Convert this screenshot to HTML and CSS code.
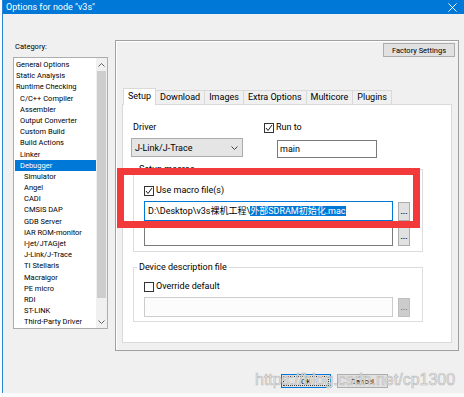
FILE: index.html
```html
<!DOCTYPE html>
<html lang="en">
<head>
  <meta charset="UTF-8" />
  <meta name="viewport" content="width=device-width, initial-scale=1.0"/>
  <title>Options for node "v3s"</title>
  <link rel="stylesheet" href="styles.css">
</head>
<body>
  <div class="window">
    <div class="titlebar">
      <span class="title">Options for node "v3s"</span>
      <svg class="close" width="9" height="9" viewBox="0 0 9 9"><path d="M0.5 0.5 L8.5 8.5 M8.5 0.5 L0.5 8.5" stroke="#fff" stroke-width="1"/></svg>
    </div>

    <div class="client">
      <div class="main">
        <div class="side">
          <div class="cat-label">Category:</div>
          <div class="listbox">
            <ul class="items">
              <li>General Options</li>
              <li>Static Analysis</li>
              <li>Runtime Checking</li>
              <li class="l1">C/C++ Compiler</li>
              <li class="l1">Assembler</li>
              <li class="l1">Output Converter</li>
              <li class="l1">Custom Build</li>
              <li class="l1">Build Actions</li>
              <li class="l1">Linker</li>
              <li class="l1 sel">Debugger</li>
              <li class="l2">Simulator</li>
              <li class="l2">Angel</li>
              <li class="l2">CADI</li>
              <li class="l2">CMSIS DAP</li>
              <li class="l2">GDB Server</li>
              <li class="l2">IAR ROM-monitor</li>
              <li class="l2">I-jet/JTAGjet</li>
              <li class="l2">J-Link/J-Trace</li>
              <li class="l2">TI Stellaris</li>
              <li class="l2">Macraigor</li>
              <li class="l2">PE micro</li>
              <li class="l2">RDI</li>
              <li class="l2">ST-LINK</li>
              <li class="l2">Third-Party Driver</li>
            </ul>
            <div class="vscroll">
              <svg class="arrow" width="7" height="4" viewBox="0 0 7 4"><path d="M0.5 3.5 L3.5 0.5 L6.5 3.5" fill="none" stroke="#606060"/></svg>
              <div class="thumb"></div>
              <svg class="arrow" width="7" height="4" viewBox="0 0 7 4"><path d="M0.5 0.5 L3.5 3.5 L6.5 0.5" fill="none" stroke="#606060"/></svg>
            </div>
          </div>
        </div>

        <div class="frame">
          <div class="frame-top">
            <button class="btn factory">Factory Settings</button>
          </div>
          <div class="tabs">
            <span class="tab active">Setup</span>
            <span class="tab">Download</span>
            <span class="tab">Images</span>
            <span class="tab">Extra Options</span>
            <span class="tab">Multicore</span>
            <span class="tab">Plugins</span>
          </div>
          <div class="panel">
            <div class="row-top">
              <div class="col-driver">
                <div class="lbl">Driver</div>
                <div class="select">
                  <span>J-Link/J-Trace</span>
                  <svg width="7" height="4" viewBox="0 0 7 4"><path d="M0.5 0.5 L3.5 3.5 L6.5 0.5" fill="none" stroke="#444"/></svg>
                </div>
              </div>
              <div class="col-run">
                <div class="check">
                  <span class="box"><svg width="8" height="8" viewBox="0 0 8 8"><path d="M1 4 L3 6.5 L7 1" fill="none" stroke="#222" stroke-width="1"/></svg></span>
                  Run to
                </div>
                <div class="input run-input">main</div>
              </div>
            </div>

            <fieldset class="group macros">
              <legend>Setup macros</legend>
              <div class="check">
                <span class="box"><svg width="8" height="8" viewBox="0 0 8 8"><path d="M1 4 L3 6.5 L7 1" fill="none" stroke="#222" stroke-width="1"/></svg></span>
                Use macro file(s)
              </div>
              <div class="file-row">
                <div class="input path focus">D:\Desktop\v3s裸机工程\<span class="selected">外部SDRAM初始化.mac</span></div>
                <span class="dots">...</span>
              </div>
              <div class="file-row">
                <div class="input path"></div>
                <span class="dots">...</span>
              </div>
            </fieldset>

            <fieldset class="group device">
              <legend>Device description file</legend>
              <div class="check">
                <span class="box"></span>
                Override default
              </div>
              <div class="file-row">
                <div class="input path disabled"></div>
                <span class="dots disabled">...</span>
              </div>
            </fieldset>
          </div>
        </div>
      </div>

      <div class="footer">
        <button class="btn ok"><span class="focus-ring">OK</span></button>
        <button class="btn cancel">Cancel</button>
      </div>
    </div>

    <div class="redbox"></div>
    <div class="watermark">https://blog.csdn.net/cp1300</div>
  </div>
</body>
</html>
```

FILE: styles.css
```css
* { box-sizing: border-box; }
body { margin: 0; background: #fafafa; font-family: Roboto, "Noto Sans CJK SC", sans-serif; font-size: 7.5px; color: #000; }

.window { position: relative; width: 462px; height: 393px; margin-left: 2px; border-left: 1px solid #2a83d3; background: #f0f0f0; overflow: hidden; }
.titlebar { height: 14px; background: #0078d7; color: #fff; display: flex; align-items: center; justify-content: space-between; padding: 0 7px 0 3px; font-size: 9px; }

.client { padding-left: 10px; }
.main { display: flex; gap: 7px; }

/* category list */
.side { width: 95px; }
.cat-label { margin: 28px 0 5px 2px; height: 10px; line-height: 10px; }
.listbox { height: 272px; border: 1px solid #adadad; background: #fff; display: flex; }
.items { list-style: none; margin: 0; padding: 1px 0 0 1px; flex: 1; }
.items li { height: 11.2px; line-height: 11.2px; padding-left: 1px; white-space: nowrap; }
.items li.l1 { padding-left: 5px; }
.items li.l2 { padding-left: 9px; }
.items li.sel { background: #0078d7; color: #fff; }
.vscroll { width: 11px; background: #f0f0f0; display: flex; flex-direction: column; align-items: center; padding: 5px 0 4px; }
.vscroll .thumb { width: 9px; height: 227px; background: #cdcdcd; margin: 4px 0 auto; }

/* right frame */
.frame { width: 344px; height: 311px; margin-top: 26px; border: 1px solid #a0a0a0; box-shadow: inset 1px 1px 0 #fff; display: flex; flex-direction: column; }
.frame-top { display: flex; justify-content: flex-end; padding: 2px 3px 0 0; }
.btn { font: inherit; font-size: 7.5px; height: 14px; padding: 0; background: #e1e1e1; border: 1px solid #adadad; color: #000; }
.btn.factory { width: 72px; }

.tabs { display: flex; align-items: flex-end; height: 16px; margin-top: 31px; padding-left: 7px; font-size: 9px; }
.tab { height: 14px; line-height: 13px; padding: 0 4px; border: 1px solid #d9d9d9; border-bottom: none; margin-left: -1px; background: #f0f0f0; }
.tab.active { height: 17px; line-height: 15px; background: #fff; margin-bottom: -1px; position: relative; z-index: 1; margin-left: 0; }

.panel { height: 239px; margin: 0 6px 7px 6px; border: 1px solid #d9d9d9; background: #fff; padding: 17px 0 0 8px; font-size: 9px; }
.row-top { display: flex; }
.lbl { height: 11px; line-height: 11px; margin-left: 2px; }
.select { width: 112px; height: 19px; margin-top: 5px; background: #e5e5e5; border: 1px solid #acacac; display: flex; align-items: center; justify-content: space-between; padding: 0 4px 0 3px; }
.col-run { margin-left: 21px; }
.check { display: flex; align-items: center; gap: 2px; height: 11px; line-height: 11px; }
.box { width: 10px; height: 10px; border: 1px solid #333; background: #fff; display: flex; align-items: center; justify-content: center; }
.input { height: 18px; border: 1px solid #7a7a7a; background: #fff; line-height: 16px; padding-left: 2px; white-space: nowrap; overflow: hidden; }
.run-input { width: 100px; margin: 7px 0 0 13px; }

.group { width: 290px; margin: 6px 0 0 2px; padding: 10px 0 5px 10px; border: 1px solid #dcdcdc; min-width: 0; }
.group legend { padding: 0 2px; margin-left: -7px; height: 11px; line-height: 11px; }
.group.device { margin-top: 10px; padding-top: 8px; padding-bottom: 4px; }
.file-row { display: flex; align-items: center; gap: 5px; margin-top: 5px; }
.input.path { width: 249px; height: 20px; line-height: 18px; padding-left: 3px; }
.input.focus { border-color: #0078d7; }
.input.disabled { border-color: #cccccc; background: #fcfcfc; }
.selected { background: #0078d7; color: #fff; }
.dots { width: 12px; height: 19px; background: #e1e1e1; border: 1px solid #adadad; font-size: 8px; font-weight: bold; display: flex; align-items: flex-end; justify-content: center; line-height: 10px; padding-bottom: 3px; }
.dots.disabled { background: #cccccc; border-color: #bfbfbf; color: #7a7a7a; }

/* bottom buttons */
.footer { display: flex; justify-content: flex-end; gap: 6px; margin-top: 23px; padding-right: 76px; }
.btn.ok { width: 50px; border-color: #0078d7; padding: 1px; }
.btn.ok .focus-ring { display: block; height: 100%; border: 1px dotted #333; line-height: 9px; }
.btn.cancel { width: 51px; }

/* overlays */
.redbox { position: absolute; left: 114px; top: 168px; width: 303px; height: 60px; border: 7px solid #f23a3b; }
.watermark { position: absolute; left: 252px; top: 371px; font-family: "Liberation Sans", sans-serif; font-size: 16px; color: #ececec; -webkit-text-stroke: 0.6px #b8b8b8; }
```
